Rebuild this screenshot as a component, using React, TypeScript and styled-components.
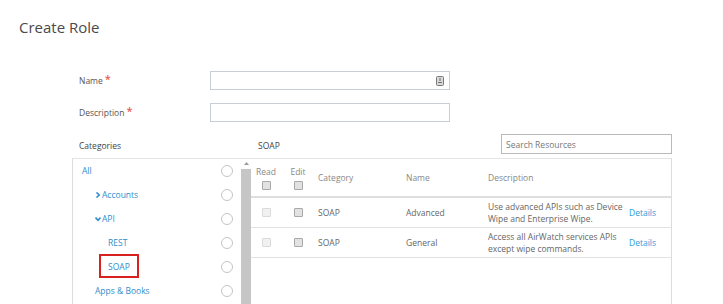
import React from "react";
import styled, { createGlobalStyle } from "styled-components";

const GlobalStyle = createGlobalStyle`
  html, body {
    margin: 0;
    padding: 0;
    background: #fff;
  }
  body {
    font-family: "Open Sans", "Liberation Sans", sans-serif;
    overflow: hidden;
  }
`;

const Page = styled.div`
  width: 723px;
  height: 304px;
  overflow: hidden;
`;

const Title = styled.h1`
  margin: 0;
  padding: 17px 0 0 19px;
  font-size: 15px;
  line-height: 20px;
  font-weight: 400;
  color: #4a4a4a;
`;

const Form = styled.div`
  margin: 34px 0 0 79px;
  display: grid;
  grid-template-columns: 131px 240px;
  grid-auto-rows: 19px;
  row-gap: 13px;
  align-items: center;
`;

const Label = styled.label`
  display: flex;
  align-items: center;
  height: 19px;
  font-size: 8.5px;
  color: #555;
`;

const Required = styled.span`
  color: #e3402f;
  font-size: 11px;
  line-height: 0;
  margin: 0 0 3px 2px;
`;

const Field = styled.div`
  height: 19px;
  box-sizing: border-box;
  border: 1px solid #c9ced6;
  display: flex;
  align-items: center;
  padding-right: 5px;
`;

const FieldInput = styled.input`
  flex: 1;
  min-width: 0;
  border: none;
  outline: none;
  height: 100%;
  padding: 0 4px;
  font: inherit;
  font-size: 8.5px;
  background: transparent;
`;

const Workspace = styled.div`
  margin: 11px 0 0 72px;
  width: 600px;
  display: grid;
  grid-template-columns: 179px 421px;
  grid-template-rows: 20px 150px;
  row-gap: 5px;
`;

const SectionHead = styled.div`
  font-size: 8.5px;
  line-height: 12px;
  color: #444;
  padding: 7px 0 0 7px;
  display: flex;
  justify-content: space-between;
  align-items: flex-start;
`;

const Search = styled.input`
  width: 171px;
  height: 20px;
  box-sizing: border-box;
  margin-top: -6px;
  border: 1px solid #b9b9b9;
  padding: 0 4px;
  font: inherit;
  font-size: 8.5px;
  color: #555;
  outline: none;
  &::placeholder {
    color: #777;
  }
`;

const CategoryPanel = styled.div`
  display: flex;
  border-left: 1px solid #dcdcdc;
  border-top: 1px solid #e4e4e4;
`;

const CategoryList = styled.div`
  flex: 1;
`;

const CategoryRow = styled.div<{ $indent: number }>`
  height: 24px;
  display: flex;
  align-items: center;
  justify-content: space-between;
  padding: 0 8px 0 ${p => p.$indent}px;
  font-size: 8.5px;
  color: #2f8dcc;
`;

const CategoryName = styled.span`
  display: flex;
  align-items: center;
  line-height: 12px;
`;

const Selected = styled.span`
  padding: 5px 7px 3px;
  margin: -5px -7px -3px;
  box-shadow: 0 0 0 2px #d8201f;
`;

const Radio = styled.span`
  width: 12px;
  height: 12px;
  box-sizing: border-box;
  border: 1px solid #c4c4c4;
  border-radius: 50%;
`;

const Scrollbar = styled.div`
  width: 10px;
  display: flex;
  flex-direction: column;
`;

const ScrollArrow = styled.div`
  height: 10px;
  display: flex;
  justify-content: center;
  padding-top: 3px;
  box-sizing: border-box;
`;

const ScrollThumb = styled.div`
  flex: 1;
  background: #c6c6c6;
`;

const TablePanel = styled.div`
  border-top: 1px solid #e4e4e4;
  border-right: 1px solid #dcdcdc;
`;

const Row = styled.div<{ $head?: boolean }>`
  display: grid;
  grid-template-columns: 30px 34px 88px 82px 141px 1fr;
  align-items: center;
  height: ${p => (p.$head ? "37px" : "29px")};
  border-bottom: ${p => (p.$head ? "2px solid #dedede" : "1px solid #e2e2e2")};
  font-size: 8.5px;
  line-height: 12px;
  color: ${p => (p.$head ? "#888" : "#666")};
`;

const Cell = styled.div`
  padding-left: 3px;
`;

const CheckCell = styled.div`
  display: flex;
  flex-direction: column;
  align-items: center;
  gap: 3px;
`;

const Box = styled.span<{ $muted?: boolean }>`
  width: 9px;
  height: 9px;
  box-sizing: border-box;
  border-radius: 1px;
  border: 1px solid ${p => (p.$muted ? "#dadada" : "#a8a8a8")};
  background: ${p => (p.$muted ? "#f1f1f1" : "#e2e2e2")};
`;

const DetailsLink = styled.a`
  color: #2d9bd8;
  text-decoration: none;
  padding-left: 3px;
`;

const Chevron = ({ open }: { open?: boolean }) => (
  <svg width="6" height="6" viewBox="0 0 6 6" style={{ marginRight: 1 }}>
    <path
      d={open ? "M0.5 1.5 L3 4.2 L5.5 1.5" : "M1.5 0.5 L4.2 3 L1.5 5.5"}
      fill="none"
      stroke="#2f8dcc"
      strokeWidth="1.6"
    />
  </svg>
);

const AutofillIcon = () => (
  <svg width="8" height="10" viewBox="0 0 8 10">
    <rect x="0.5" y="0.5" width="7" height="9" rx="1" fill="#d9d9d9" stroke="#7a7a7a" />
    <path d="M4 2 V5 M2.2 6.5 H5.8" stroke="#6a6a6a" strokeWidth="1" />
  </svg>
);

const categories = [
  { name: "All", indent: 9 },
  { name: "Accounts", indent: 22, chevron: "closed" },
  { name: "API", indent: 22, chevron: "open" },
  { name: "REST", indent: 35 },
  { name: "SOAP", indent: 35, selected: true },
  { name: "Apps & Books", indent: 22 },
];

const resources = [
  { category: "SOAP", name: "Advanced", description: "Use advanced APIs such as Device Wipe and Enterprise Wipe." },
  { category: "SOAP", name: "General", description: "Access all AirWatch services APIs except wipe commands." },
];

export default function App() {
  return (
    <Page>
      <GlobalStyle />
      <Title>Create Role</Title>
      <Form>
        <Label>
          Name<Required>*</Required>
        </Label>
        <Field>
          <FieldInput />
          <AutofillIcon />
        </Field>
        <Label>
          Description<Required>*</Required>
        </Label>
        <Field>
          <FieldInput />
        </Field>
      </Form>
      <Workspace>
        <SectionHead>Categories</SectionHead>
        <SectionHead>
          SOAP
          <Search placeholder="Search Resources" />
        </SectionHead>
        <CategoryPanel>
          <CategoryList>
            {categories.map(c => (
              <CategoryRow key={c.name} $indent={c.indent}>
                <CategoryName>
                  {c.chevron && <Chevron open={c.chevron === "open"} />}
                  {c.selected ? <Selected>{c.name}</Selected> : c.name}
                </CategoryName>
                <Radio />
              </CategoryRow>
            ))}
          </CategoryList>
          <Scrollbar>
            <ScrollArrow>
              <svg width="5" height="3" viewBox="0 0 5 3">
                <path d="M0 3 L2.5 0 L5 3 Z" fill="#9a9a9a" />
              </svg>
            </ScrollArrow>
            <ScrollThumb />
          </Scrollbar>
        </CategoryPanel>
        <TablePanel>
          <Row $head>
            <CheckCell>
              Read
              <Box />
            </CheckCell>
            <CheckCell>
              Edit
              <Box />
            </CheckCell>
            <Cell>Category</Cell>
            <Cell>Name</Cell>
            <Cell>Description</Cell>
            <Cell />
          </Row>
          {resources.map(r => (
            <Row key={r.name}>
              <CheckCell>
                <Box $muted />
              </CheckCell>
              <CheckCell>
                <Box />
              </CheckCell>
              <Cell>{r.category}</Cell>
              <Cell>{r.name}</Cell>
              <Cell>{r.description}</Cell>
              <DetailsLink href="#">Details</DetailsLink>
            </Row>
          ))}
        </TablePanel>
      </Workspace>
    </Page>
  );
}
